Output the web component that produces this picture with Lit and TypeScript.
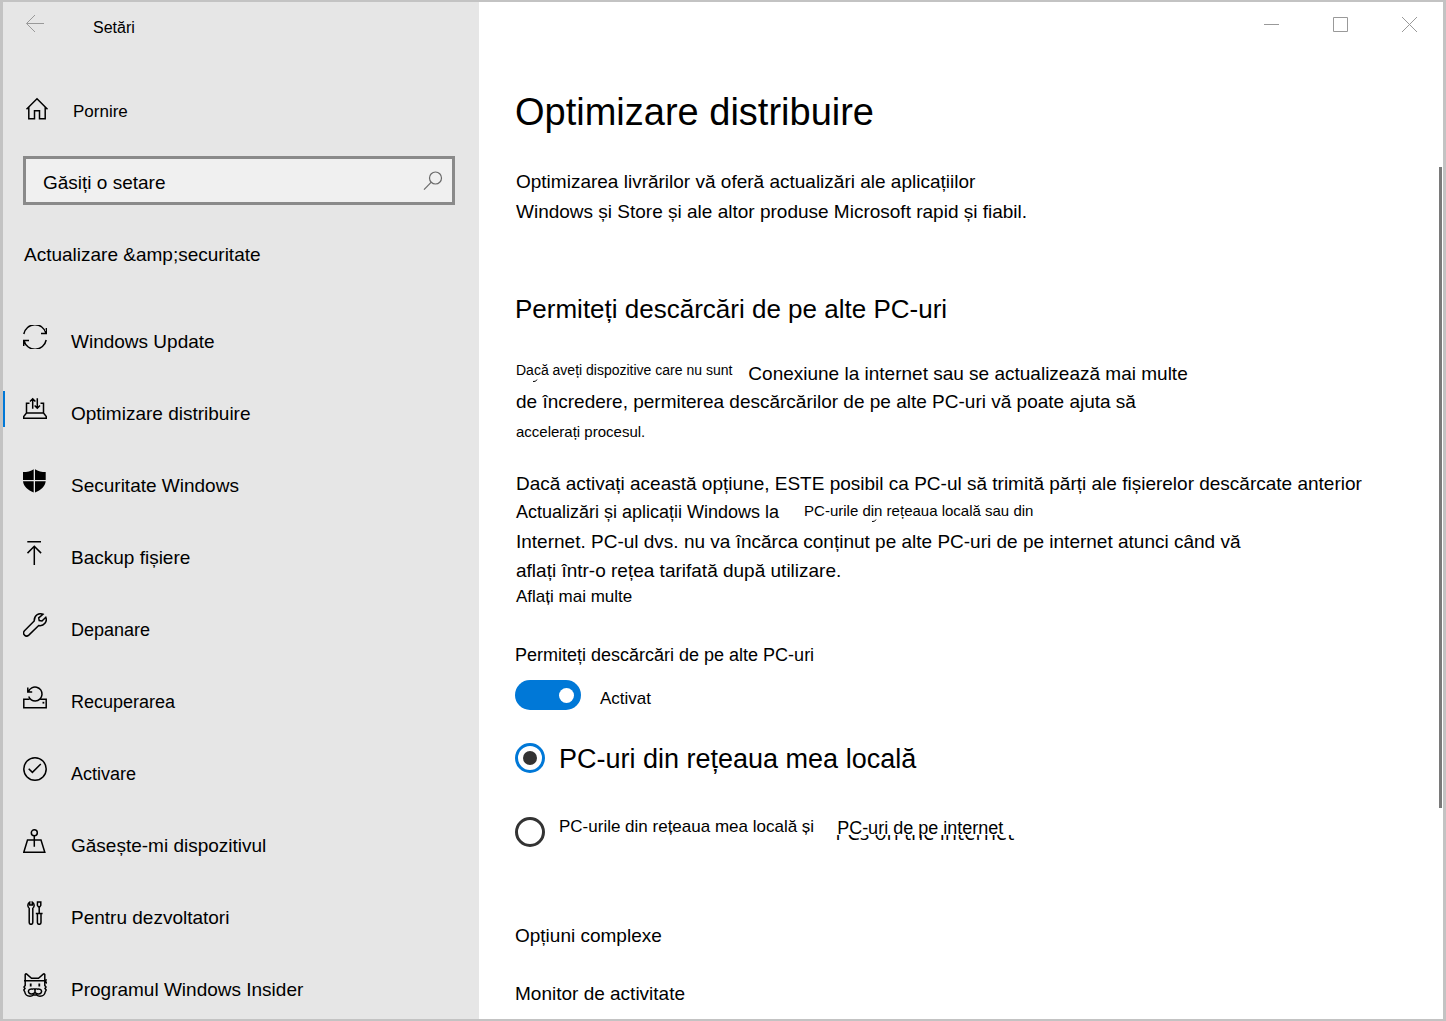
import { LitElement, html, css, svg, TemplateResult } from "lit";
import { customElement, state } from "lit/decorators.js";

interface NavItem {
  label: string;
  icon: TemplateResult;
  compact?: boolean;
}

const icons = {
  update: svg`<path d="M.8 9A11.4 11.4 0 0 1 23 8.200M18 8.500h5.400V3M23.200 15A11.400 11.400 0 0 1 1 15.800M.7 21v-5.400H6"/>`,
  delivery: svg`<path d="M6.500 6.300H3.500V16L.7 19.500V21.300h22.600V19.500L20.500 16V6.300h-3M3.500 16h17M9.700 11.800V1.700M7 4.500l2.700-2.700 2.700 2.700M14.300 1.200v10M11.600 8.500l2.700 2.700L17 8.500"/>`,
  shield: svg`<path class="solid" d="M10.700.2C8 2.200 4 3 0 3v8h10.700zM12 .2V11h10.700V3C19 3 15 2.200 12 .2zM0 12.200h10.700v11.300C5 21 .6 17.500 0 12.200zM12 12.200h10.700C22 17.500 18 21 12 23.500z"/>`,
  backup: svg`<path d="M4.300.8H18M11.300 24V5.300M4.500 12.100l6.800-6.800 6.800 6.800"/>`,
  wrench: svg`<path d="M20 1.300C16.500-.2 11 1.600 11.200 8L1.500 17.800c-1.200 1.300-1.200 3 0 4.300 1.200 1.200 3 1.200 4.300 0L15.700 12.500C21 13.500 24.600 8.500 22.800 4.200L19 8l-2.800-.5-.5-2.700z"/>`,
  recover: svg`<path d="M6.500 14.300H.8v8.400h22.400v-8.400H17.500M4.800 2.500v4.400h4.400M5.500 6.500A7 7 0 1 1 12.300 16C9.500 16 7 14.500 5.700 11.500"/><path class="solid" d="M19.500 16.800h1.800v1.800h-1.800z"/>`,
  check: svg`<circle cx="12" cy="12" r="11.200"/><path d="M5.700 11.700l3.700 3.700L17.800 7"/>`,
  find: svg`<circle cx="11.300" cy="3.800" r="3"/><path d="M11.300 6.800v11M4.500 11H18l3.800 12.200H.8z"/>`,
  dev: svg`<path d="M6.200 7v14.500a1.700 1.700 0 0 0 3.600 0V7M6.200 7C4.200 5.500 4.500 2.500 6.700 1.200v2.800h2.600V1.200c2.200 1.300 2.500 4.300.5 5.800M14.500 1h3.300v3.300l-1 1.500h-1.400l-1-1.500zM16.200 5.800V12.500M12.800 12.500h6.800M14.400 12.500v9a1.700 1.700 0 0 0 3.600 0v-9"/>`,
  cat: svg`<path d="M2.200 7.500V1.500Q2.500.5 3.500 1l5 4.300h7l5-4.300q1-.5 1.300.5v6M1 7.800h21.500M22 7.800l1.800-1.300M22.500 8l1.300 2.500M2.200 8v4.500L1 14l1 1.500L.8 17l1 2c.4 2.500 2.400 4.200 5.200 4.200 1.500 0 2.500-.4 3.500-1.200h3c1 .8 2 1.200 3.500 1.200 2.800 0 4.800-1.700 5.200-4.200l1-2-1.200-1.500 1-1.500-1.200-1.500V8M12 18v1.500M12 19.500c-1.500 2-6 2-6.500-.7-.4-2.200 2.200-3.300 4.500-2.500M12 19.500c1.500 2 6 2 6.500-.7.4-2.200-2.200-3.300-4.500-2.500"/><path class="solid" d="M9.500 15.300h5L12 18.500zM6.800 10.500h1.800v3H6.800zM15.400 10.500h1.800v3h-1.800z"/>`,
};

const NAV: NavItem[] = [
  { label: "Windows Update", icon: icons.update },
  { label: "Optimizare distribuire", icon: icons.delivery },
  { label: "Securitate Windows", icon: icons.shield },
  { label: "Backup fișiere", icon: icons.backup },
  { label: "Depanare", icon: icons.wrench, compact: true },
  { label: "Recuperarea", icon: icons.recover, compact: true },
  { label: "Activare", icon: icons.check, compact: true },
  { label: "Găsește-mi dispozitivul", icon: icons.find },
  { label: "Pentru dezvoltatori", icon: icons.dev },
  { label: "Programul Windows Insider", icon: icons.cat },
];

@customElement("settings-sidebar")
export class SettingsSidebar extends LitElement {
  @state() private current = "Optimizare distribuire";

  static styles = css`
    :host {
      display: block;
      background: #e6e6e6;
      padding-bottom: 16px;
    }
    * { box-sizing: border-box; }
    svg { display: block; fill: none; stroke: #000; stroke-width: 1.5; }
    svg .solid { fill: #000; stroke: none; }
    .top { display: flex; align-items: center; height: 50px; padding-left: 17px; gap: 43px; font-size: 16px; }
    .top span, .home span { padding-top: 2px; }
    .back { border: 0; background: none; padding: 0 0 7px; width: 30px; display: grid; place-items: center; }
    .back svg { stroke: #999; stroke-width: 1; }
    a { color: inherit; text-decoration: none; }
    .home { display: flex; align-items: center; height: 48px; margin-top: 35px; padding-left: 22px; gap: 24px; font-size: 17px; }
    .home svg { margin-bottom: 4px; }
    .search { display: flex; align-items: center; margin: 21px 24px 0 20px; height: 49px; border: 3px solid #8a8a8a; background: #f0f0f0; padding: 0 9px 0 17px; }
    .search input { flex: 1; min-width: 0; height: 100%; padding: 5px 0 0; border: 0; outline: 0; background: none; font: inherit; font-size: 19px; color: #000; }
    .search input::placeholder { color: #000; opacity: 1; }
    .search button { border: 0; background: none; padding: 0; }
    .search svg { stroke: #6a6a6a; stroke-width: 1.2; }
    h2 { margin: 38px 0 0 21px; font-size: 19px; line-height: 24px; font-weight: 400; }
    ul { list-style: none; margin: 52px 0 0; padding: 0; display: grid; gap: 36px; }
    .item { display: flex; align-items: center; gap: 24px; height: 36px; padding-left: 18px; border-left: 2px solid transparent; font-size: 19px; }
    .item span { padding-top: 10px; }
    .item.compact { font-size: 18px; }
    .item.current { border-left-color: #0078d7; }
  `;

  render() {
    return html`
      <div class="top">
        <button class="back" aria-label="Înapoi">
          <svg width="18" height="18" viewBox="0 0 18 18"><path d="M18 8.500H.7M9 0L.5 8.500 9 17" /></svg>
        </button>
        <span>Setări</span>
      </div>
      <a class="home" href="#home">
        <svg width="24" height="24" viewBox="0 0 24 24"><path d="M1.500 12.300L12 1.800l10.500 10.500M3.800 10v11.800h5.700v-8h5v8h5.700V10" /></svg>
        <span>Pornire</span>
      </a>
      <div class="search">
        <input type="text" aria-label="Găsiți o setare" placeholder="Găsiți o setare" />
        <button aria-label="Căutare">
          <svg width="20" height="20" viewBox="0 0 20 20"><circle cx="12.500" cy="7" r="6" /><path d="M8.300 11.200L1 18.700" /></svg>
        </button>
      </div>
      <h2>Actualizare &amp;amp;securitate</h2>
      <nav>
        <ul>
          ${NAV.map(
            (n) => html`<li>
              <a
                class="item ${n.compact ? "compact" : ""} ${n.label === this.current ? "current" : ""}"
                href="#${encodeURIComponent(n.label)}"
                @click=${() => (this.current = n.label)}
              >
                <svg width="24" height="24" viewBox="0 0 24 24">${n.icon}</svg>
                <span>${n.label}</span>
              </a>
            </li>`
          )}
        </ul>
      </nav>
    `;
  }
}

@customElement("delivery-page")
export class DeliveryPage extends LitElement {
  static styles = css`
    :host { display: block; background: #fff; position: relative; min-width: 0; }
    * { box-sizing: border-box; }
    .controls { display: flex; justify-content: flex-end; gap: 24px; padding-right: 11px; height: 45px; }
    .controls button { width: 45px; border: 0; padding: 0; background: none; display: grid; place-items: center; }
    .controls svg { fill: none; stroke: #999; }
    .content { padding: 39px 36px 12px; font-size: 19px; }
    h1, h2, p { margin: 0; font-weight: 400; }
    h1 { font-size: 38px; line-height: 52px; }
    p, .more { padding-left: 1px; }
    .intro { margin-top: 29px; line-height: 30px; }
    h2 { margin-top: 64px; font-size: 26px; line-height: 36px; }
    .trust { margin-top: 33px; line-height: 28px; }
    .upload { margin-top: 21px; line-height: 29px; }
    .line { display: flex; gap: 16px; }
    .line.wide { gap: 25px; font-size: 18px; }
    .note { position: relative; font-size: 14px; line-height: 20px; }
    .tail { position: absolute; left: 16px; top: 19px; fill: none; stroke: #000; }
    .tail.far { left: 67px; top: 21px; }
    .last { display: block; font-size: 15px; line-height: 32px; }
    .small { font-size: 15px; line-height: 26px; }
    .more { margin-top: 1px; font-size: 17px; line-height: 22px; }
    a { display: block; width: fit-content; color: inherit; text-decoration: none; }
    .caption { display: block; margin-top: 35px; font-size: 18px; line-height: 24px; }
    .row { display: flex; align-items: center; width: fit-content; height: 30px; }
    .toggle { margin-top: 13px; gap: 19px; font-size: 17px; }
    .toggle span { padding-top: 8px; }
    input { appearance: none; margin: 0; flex: none; display: grid; place-items: center; }
    .switch { width: 66px; height: 30px; border-radius: 15px; background: #0078d7; justify-items: end; padding-right: 7px; }
    .switch::before { content: ""; width: 15px; height: 15px; border-radius: 50%; background: #fff; }
    .switch:not(:checked) { background: #999; justify-items: start; padding: 0 0 0 7px; }
    .choice { margin-top: 33px; gap: 14px; font-size: 27px; }
    .choice span { padding-top: 2px; }
    .choice.second { margin-top: 44px; font-size: 17px; align-items: flex-start; }
    .choice.second span { padding-top: 0; }
    .radio { width: 30px; height: 30px; border: 3px solid #333; border-radius: 50%; background: #fff; }
    .radio:checked { border-color: #0078d7; }
    .radio:checked::before { content: ""; width: 14px; height: 14px; border-radius: 50%; background: #333; }
    .pair { display: flex; gap: 23px; line-height: 20px; }
    .net { position: relative; font-size: 18px; line-height: 23px; }
    .ghost { position: absolute; left: -2px; top: 18px; width: 180px; height: 6px; overflow: hidden; display: flex; align-items: flex-end; font-family: "Open Sans", "Noto Sans", sans-serif; font-size: 20px; line-height: 16px; white-space: nowrap; }
    .links { display: grid; gap: 34px; margin-top: 77px; line-height: 24px; }
    .thumb { position: absolute; right: 1px; top: 165px; width: 3px; height: 63%; background: #7a7a7a; }
  `;

  render() {
    return html`
      <div class="controls">
        <button aria-label="Minimizare"><svg width="15" height="15"><path d="M0 7.500h15" /></svg></button>
        <button aria-label="Maximizare"><svg width="15" height="15"><path d="M.5.500h14v14H.5z" /></svg></button>
        <button aria-label="Închidere"><svg width="15" height="15"><path d="M0 0l15 15M15 0L0 15" /></svg></button>
      </div>
      <main class="content">
        <h1>Optimizare distribuire</h1>
        <p class="intro">
          Optimizarea livrărilor vă oferă actualizări ale aplicațiilor<br />
          Windows și Store și ale altor produse Microsoft rapid și fiabil.
        </p>
        <h2>Permiteți descărcări de pe alte PC-uri</h2>
        <p class="trust">
          <span class="line">
            <span class="note">Dacă aveți dispozitive care nu sunt<svg class="tail" width="6" height="4"><path d="M1 2.500Q4 3 5 .500" /></svg></span>
            <span>Conexiune la internet sau se actualizează mai multe</span>
          </span>
          de încredere, permiterea descărcărilor de pe alte PC-uri vă poate ajuta să
          <span class="last">accelerați procesul.</span>
        </p>
        <p class="upload">
          Dacă activați această opțiune, ESTE posibil ca PC-ul să trimită părți ale fișierelor descărcate anterior
          <span class="line wide">
            <span>Actualizări și aplicații Windows la</span>
            <span class="note small">PC-urile din rețeaua locală sau din<svg class="tail far" width="6" height="4"><path d="M1 2.500Q4 3 5 .500" /></svg></span>
          </span>
          Internet. PC-ul dvs. nu va încărca conținut pe alte PC-uri de pe internet atunci când vă<br />
          aflați într-o rețea tarifată după utilizare.
        </p>
        <a class="more" href="#more">Aflați mai multe</a>

        <label class="caption" for="allow">Permiteți descărcări de pe alte PC-uri</label>
        <div class="row toggle">
          <input class="switch" id="allow" type="checkbox" role="switch" checked />
          <span>Activat</span>
        </div>
        <label class="row choice">
          <input class="radio" type="radio" name="scope" checked />
          <span>PC-uri din rețeaua mea locală</span>
        </label>
        <label class="row choice second">
          <input class="radio" type="radio" name="scope" />
          <span class="pair">
            <span>PC-urile din rețeaua mea locală și</span>
            <span class="net">PC-uri de pe internet<span class="ghost" aria-hidden="true">PCs on the internet</span></span>
          </span>
        </label>
        <div class="links">
          <a href="#advanced">Opțiuni complexe</a>
          <a href="#activity">Monitor de activitate</a>
        </div>
      </main>
      <div class="thumb"></div>
    `;
  }
}

@customElement("app-root")
export class AppRoot extends LitElement {
  static styles = css`
    :host {
      display: grid;
      grid-template-columns: 476px minmax(0, 1fr);
      box-sizing: border-box;
      min-height: 100vh;
      border: solid #c3c3c3;
      border-width: 2px 3px;
      font-family: "Liberation Sans", Arial, sans-serif;
      color: #000;
    }
  `;

  render() {
    return html`<settings-sidebar></settings-sidebar><delivery-page></delivery-page>`;
  }
}
